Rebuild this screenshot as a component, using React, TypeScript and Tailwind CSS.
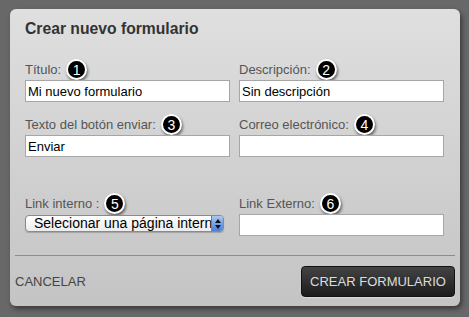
import React from "react";

type BadgeProps = { n: number };

const Badge: React.FC<BadgeProps> = ({ n }) => (
    <span className="ml-[5px] -my-[4px] inline-flex h-[21px] w-[21px] items-center justify-center rounded-full border-[2px] border-white bg-black text-[14px] leading-none text-white shadow-[1px_2px_3px_rgba(0,0,0,0.55)]">
        {n}
    </span>
);

type FieldProps = {
    label: string;
    n: number;
    value?: string;
};

const Field: React.FC<FieldProps> = ({ label, n, value = "" }) => (
    <div className="flex flex-col">
        <div className="flex h-[15px] items-center text-[13px] text-[#555]">
            <span>{label}</span>
            <Badge n={n} />
        </div>
        <input
            type="text"
            defaultValue={value}
            className="mt-[3px] h-[22px] w-full border border-[#a6a6a6] bg-white px-[2px] text-[13px] text-black outline-none"
        />
    </div>
);

export default function App() {
    return (
        <div
            className="flex h-[317px] w-[469px] bg-[#686868] pl-[10px] pt-[9px]"
            style={{ fontFamily: '"Liberation Sans", Arial, sans-serif' }}
        >
            <div className="flex h-[297px] w-[450px] flex-col rounded-[6px] bg-gradient-to-b from-[#dfdfdf] to-[#c4c4c4] shadow-[2px_3px_5px_rgba(0,0,0,0.45)]">
                <div className="pl-[15px] pr-[16px] pt-[11px]">
                    <h1 className="text-[15.7px] font-bold leading-[18px] text-[#333]">Crear nuevo formulario</h1>

                    <div className="mt-[24px] grid grid-cols-2 gap-x-[9px]">
                        <Field label="Título:" n={1} value="Mi nuevo formulario" />
                        <Field label="Descripción:" n={2} value="Sin descripción" />
                    </div>

                    <div className="mt-[15px] grid grid-cols-2 gap-x-[9px]">
                        <Field label="Texto del botón enviar:" n={3} value="Enviar" />
                        <Field label="Correo electrónico:" n={4} />
                    </div>

                    <div className="mt-[39px] grid grid-cols-2 gap-x-[9px]">
                        <div className="flex flex-col">
                            <div className="flex h-[15px] items-center text-[13px] text-[#555]">
                                <span>Link interno :</span>
                                <Badge n={5} />
                            </div>
                            <div className="mt-[4px] flex h-[17px] w-[199px] items-stretch overflow-hidden rounded-[4px] border border-[#8a8a8a] bg-gradient-to-b from-white to-[#ececec] shadow-[0_1px_1px_rgba(0,0,0,0.2)]">
                                <span className="flex-1 overflow-hidden whitespace-nowrap pl-[8px] text-[14px] leading-[15px] text-black">
                                    Selecionar una página interna
                                </span>
                                <span className="flex w-[12px] flex-col items-center justify-center gap-[2px] border-l border-[#5b7fc0] bg-gradient-to-b from-[#a9c6f3] to-[#4a80d8]">
                                    <svg width="6" height="4" viewBox="0 0 6 4">
                                        <path d="M0 4 L3 0 L6 4 Z" fill="#111" />
                                    </svg>
                                    <svg width="6" height="4" viewBox="0 0 6 4">
                                        <path d="M0 0 L6 0 L3 4 Z" fill="#111" />
                                    </svg>
                                </span>
                            </div>
                        </div>
                        <Field label="Link Externo:" n={6} />
                    </div>
                </div>

                <div className="mx-[5px] mt-[19px] border-t border-[#8c8c8c]" />

                <div className="flex items-center justify-between pl-[5px] pr-[5px] pt-[10px]">
                    <span className="text-[13px] text-[#444]">CANCELAR</span>
                    <button className="h-[31px] w-[154px] rounded-[4px] border border-[#111] bg-gradient-to-b from-[#444] to-[#1c1c1c] text-[13px] text-[#dcdcdc] shadow-[0_1px_1px_rgba(255,255,255,0.4)]">
                        CREAR FORMULARIO
                    </button>
                </div>
            </div>
        </div>
    );
}
